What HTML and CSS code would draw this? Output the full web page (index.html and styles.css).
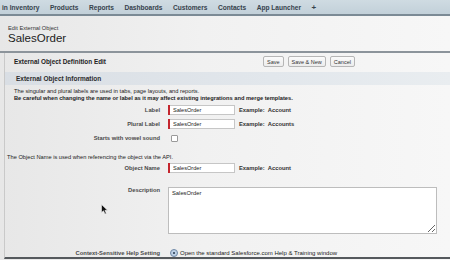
FILE: index.html
```html
<!DOCTYPE html>
<html lang="en">
<head>
    <meta charset="UTF-8">
    <meta name="viewport" content="width=device-width, initial-scale=1.0">
    <title>Edit External Object: SalesOrder</title>
    <link rel="stylesheet" href="styles.css">
</head>
<body>
    <nav class="tabs">
        <a href="#">in Inventory</a>
        <a href="#">Products</a>
        <a href="#">Reports</a>
        <a href="#">Dashboards</a>
        <a href="#">Customers</a>
        <a href="#">Contacts</a>
        <a href="#">App Launcher</a>
        <a href="#" class="plus">+</a>
    </nav>

    <div class="page-header">
        <div class="page-type">Edit External Object</div>
        <h1>SalesOrder</h1>
    </div>

    <div class="block">
        <div class="block-head">
            <h2>External Object Definition Edit</h2>
            <div class="buttons">
                <button class="btn">Save</button>
                <button class="btn">Save &amp; New</button>
                <button class="btn">Cancel</button>
            </div>
        </div>

        <div class="section-head">External Object Information</div>

        <div class="notes">
            <p>The singular and plural labels are used in tabs, page layouts, and reports.</p>
            <p class="warn">Be careful when changing the name or label as it may affect existing integrations and merge templates.</p>
        </div>

        <div class="row first">
            <label>Label</label>
            <div class="req"><input type="text" value="SalesOrder"></div>
            <span class="example">Example:&nbsp; Account</span>
        </div>
        <div class="row">
            <label>Plural Label</label>
            <div class="req"><input type="text" value="SalesOrder"></div>
            <span class="example">Example:&nbsp; Accounts</span>
        </div>
        <div class="row">
            <label>Starts with vowel sound</label>
            <span class="checkbox"></span>
        </div>

        <p class="api-note">The Object Name is used when referencing the object via the API.</p>

        <div class="row">
            <label>Object Name</label>
            <div class="req"><input type="text" value="SalesOrder"></div>
            <span class="example">Example:&nbsp; Account</span>
        </div>

        <div class="row desc">
            <label>Description</label>
            <textarea>SalesOrder</textarea>
        </div>

        <div class="row help">
            <label>Context-Sensitive Help Setting</label>
            <span class="radio"><span class="dot"></span></span>
            <span class="radio-text">Open the standard Salesforce.com Help &amp; Training window</span>
        </div>

        <svg class="cursor" width="8" height="11" viewBox="0 0 8 11">
            <path d="M0.5 0.5 L0.5 8.5 L2.5 6.8 L4 10 L5.3 9.4 L3.9 6.3 L6.5 6.3 Z" fill="#111" stroke="#eee" stroke-width="0.6"/>
        </svg>
    </div>
</body>
</html>
```

FILE: styles.css
```css
body {
    margin: 0;
    font-family: "Liberation Sans", Arial, sans-serif;
    color: #222;
    background: linear-gradient(to right, #e7e7e7, #f1f1f1 45%, #f7f7f7);
    height: 260px;
    overflow: hidden;
}
.tabs {
    display: flex;
    align-items: center;
    gap: 10.5px;
    height: 14px;
    padding-left: 2px;
    background: linear-gradient(to bottom, #cfdbe2, #c2d0d9);
    border-bottom: 2px solid #7b8a95;
}
.tabs a {
    color: #36424c;
    font-size: 6.6px;
    font-weight: bold;
    text-decoration: none;
}
.tabs .plus {
    font-size: 8px;
}
.page-header {
    height: 26px;
    padding: 9px 0 0 8px;
    border-bottom: 2px solid #8c949b;
}
.page-type {
    font-size: 5.7px;
    color: #333;
    line-height: 7px;
}
.page-header h1 {
    margin: 0;
    font-size: 11.5px;
    font-weight: normal;
    line-height: 13px;
    color: #1c1c1c;
}
.block {
    position: relative;
    margin-left: 4px;
    border-left: 1px solid #c9c9c9;
    border-bottom: 2px solid #55595d;
    height: 204px;
}
.block-head {
    display: flex;
    align-items: center;
    height: 17px;
    padding-left: 9px;
}
.block-head h2 {
    margin: 0;
    font-size: 6.4px;
    color: #222;
    width: 249px;
}
.buttons {
    display: flex;
    gap: 4px;
}
.btn {
    font-family: inherit;
    font-size: 5.5px;
    color: #333;
    height: 11px;
    padding: 0 3px;
    background: linear-gradient(to bottom, #fbfbfb, #ececec);
    border: 1px solid #b6b6b6;
    border-radius: 2px;
}
.section-head {
    margin-top: 2px;
    height: 13px;
    line-height: 13px;
    padding-left: 11px;
    font-size: 6.5px;
    font-weight: bold;
    color: #2b2b2b;
    background: linear-gradient(to right, #d9dee4, #e2e7ec 60%, #e9edf0);
}
.notes {
    margin-top: 3px;
    padding-left: 9px;
}
.notes p,
.api-note {
    margin: 0;
    font-size: 5.7px;
    line-height: 7px;
    color: #222;
}
.notes .warn {
    font-weight: bold;
}
.api-note {
    margin-top: 8px;
    padding-left: 2px;
    line-height: 8px;
}
.row {
    display: flex;
    align-items: center;
    height: 14px;
}
.row.first {
    margin-top: 1px;
}
.row label {
    width: 155px;
    padding-right: 8px;
    text-align: right;
    font-size: 5.8px;
    font-weight: bold;
    color: #4a4a4a;
}
.req {
    border-left: 2px solid #c4262e;
    margin-right: 4px;
}
.req input {
    display: block;
    width: 65px;
    height: 10px;
    box-sizing: border-box;
    margin: 0;
    padding: 0 3px;
    border: 1px solid #c6c6c6;
    border-left: none;
    background: #fff;
    font-family: inherit;
    font-size: 5.6px;
    color: #222;
}
.example {
    font-size: 5.8px;
    font-weight: bold;
    color: #333;
}
.checkbox {
    display: inline-block;
    width: 5px;
    height: 5px;
    margin-left: 3px;
    border: 1px solid #9a9a9a;
    border-radius: 1px;
    background: #fff;
}
.row.desc {
    margin-top: 12px;
    height: auto;
    align-items: flex-start;
}
.row.desc label {
    line-height: 7px;
}
.row.desc textarea {
    width: 269px;
    height: 47px;
    box-sizing: border-box;
    margin: 0;
    padding: 2px 3px;
    border: 1px solid #bdbdbd;
    background: #fff;
    font-family: inherit;
    font-size: 5.8px;
    color: #222;
    resize: both;
}
.row.help {
    margin-top: 12px;
}
.radio {
    display: inline-flex;
    align-items: center;
    justify-content: center;
    width: 6px;
    height: 6px;
    margin: 0 2px 0 2px;
    border: 1px solid #6f88a6;
    border-radius: 50%;
    background: #bcd0e6;
}
.radio .dot {
    width: 2.5px;
    height: 2.5px;
    border-radius: 50%;
    background: #23374d;
}
.radio-text {
    font-size: 6px;
    color: #222;
}
.cursor {
    position: absolute;
    left: 96px;
    top: 151px;
}
```
